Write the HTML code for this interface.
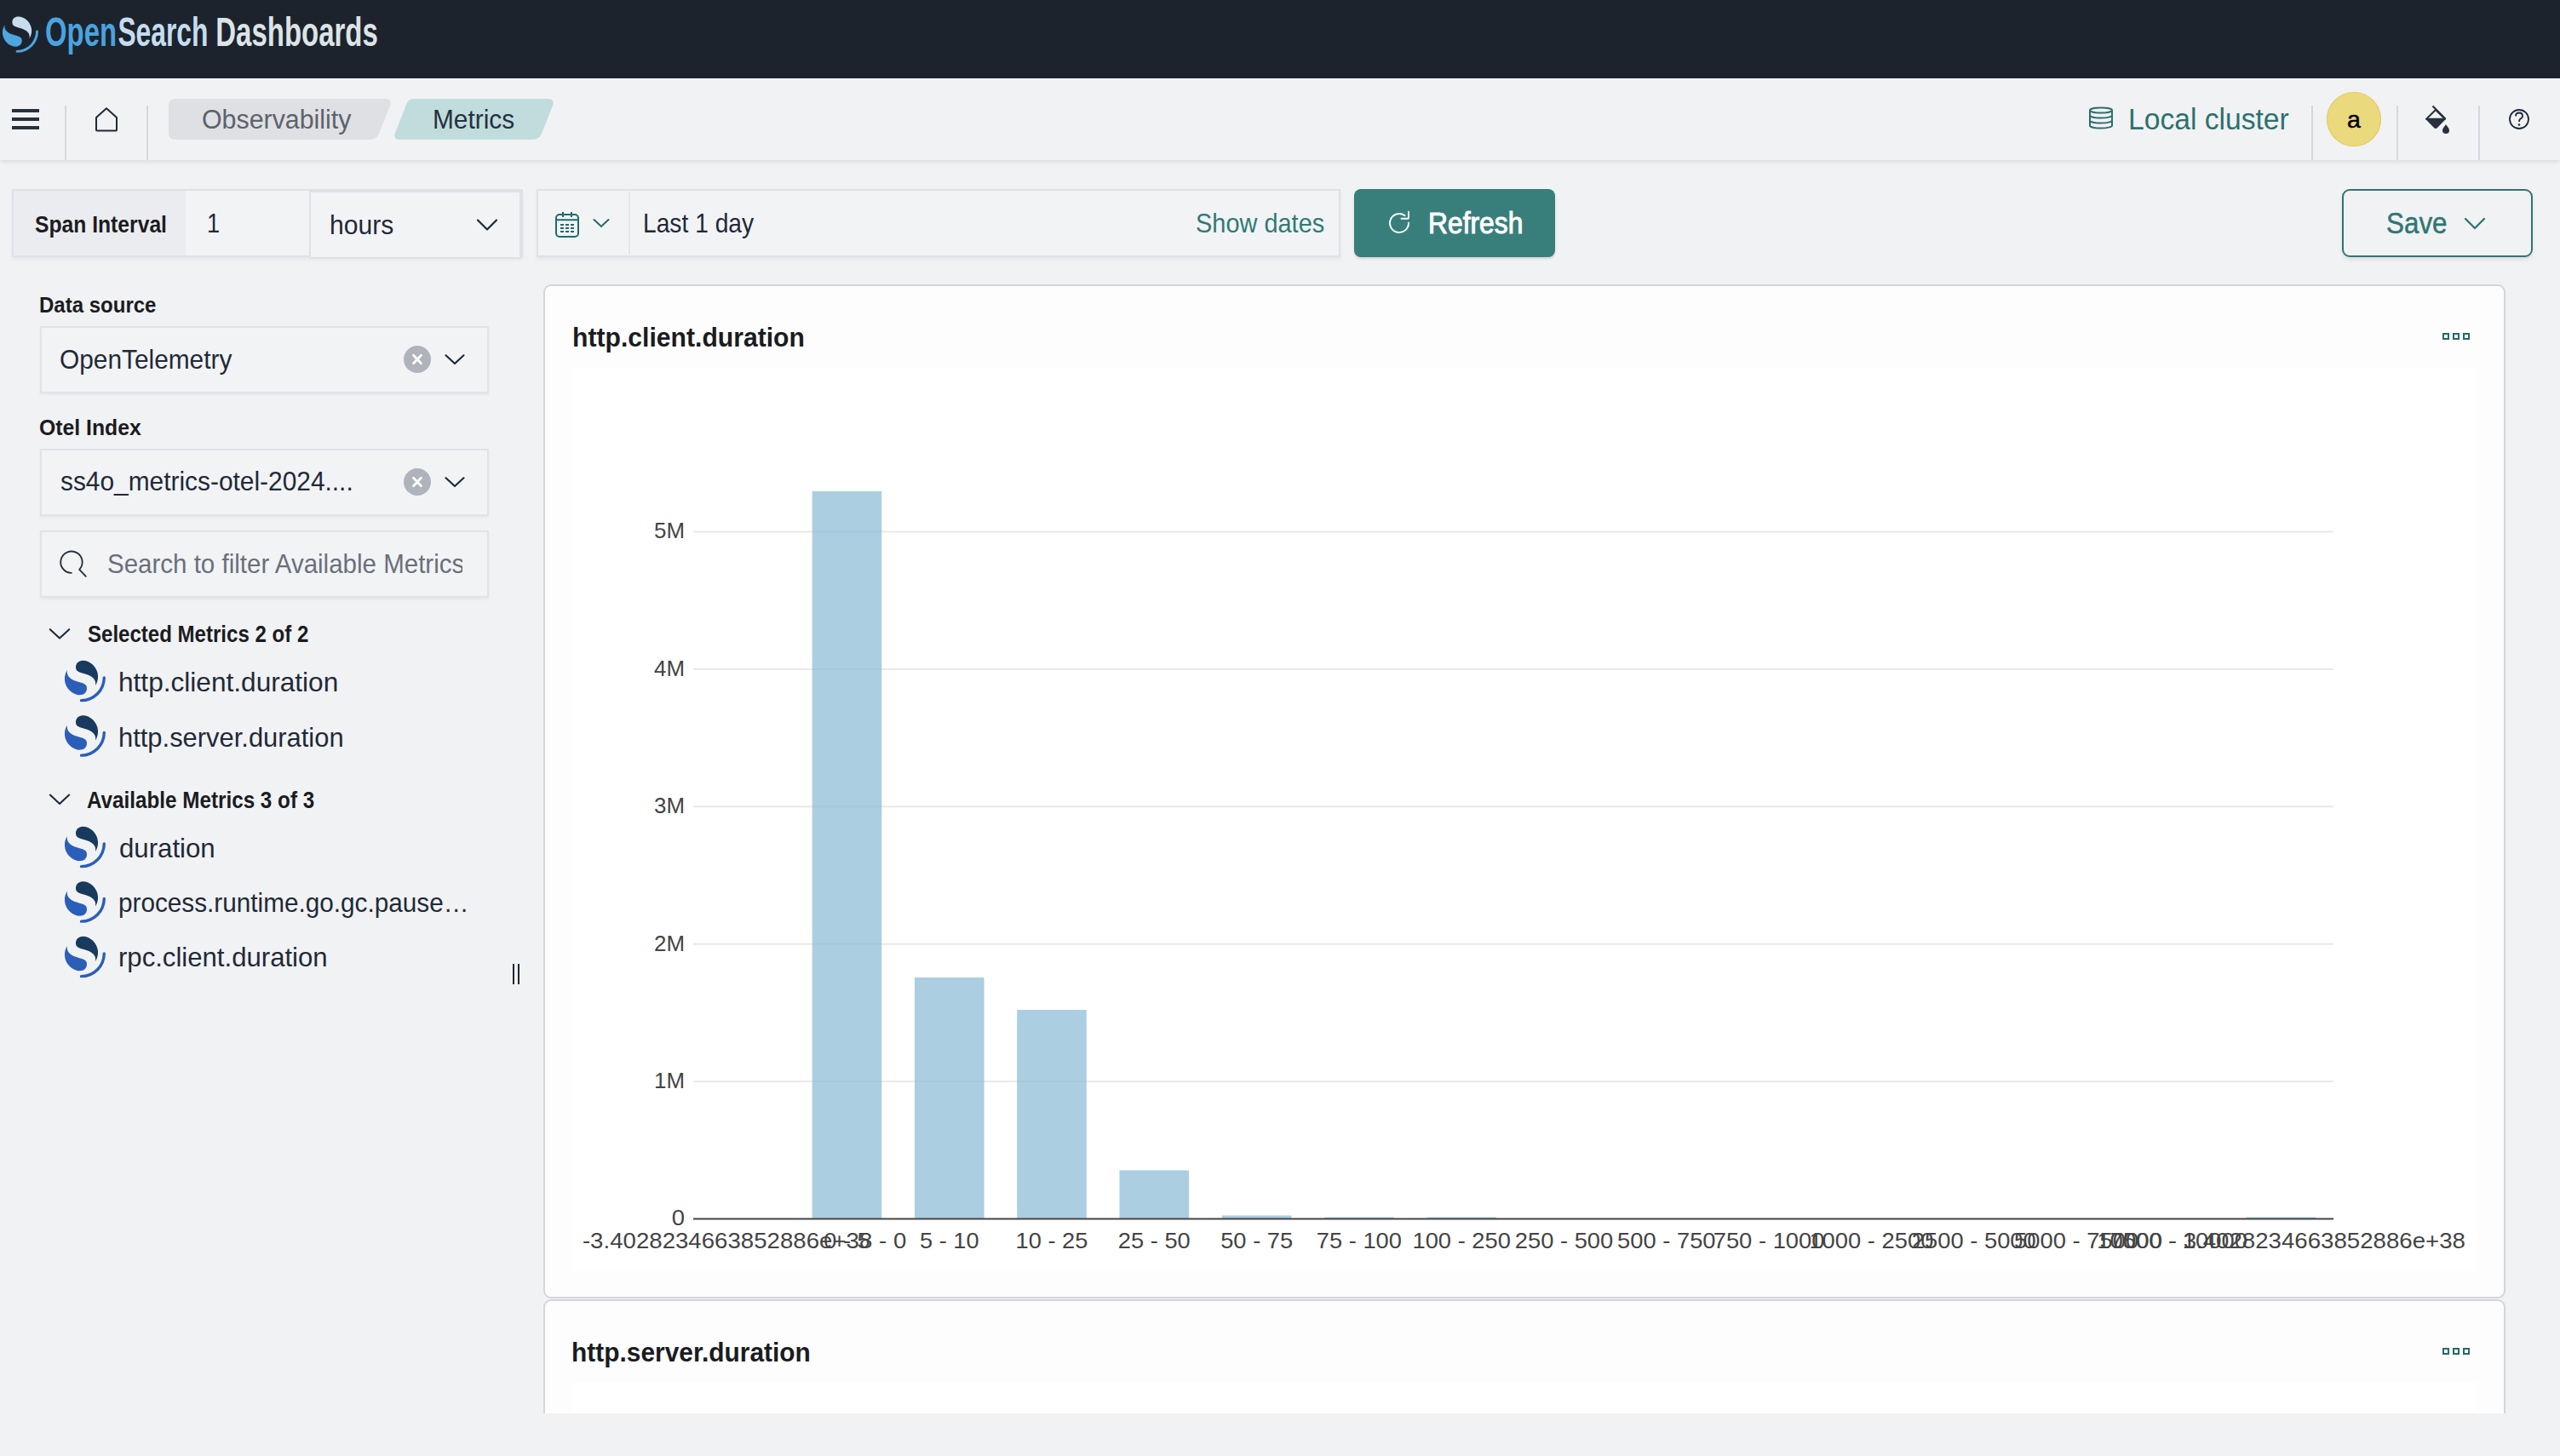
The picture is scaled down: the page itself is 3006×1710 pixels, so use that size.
<!DOCTYPE html>
<html><head><meta charset="utf-8"><title>Metrics</title>
<style>
html,body{margin:0;padding:0;width:3006px;height:1710px;overflow:hidden;background:#f1f2f4;font-family:"Liberation Sans",sans-serif;}
.a{position:absolute;box-sizing:border-box;}
.t{position:absolute;white-space:nowrap;transform-origin:0 0;}
svg{position:absolute;left:0;top:0;overflow:visible;}
</style></head><body>

<div class="a" style="left:0;top:0;width:3006px;height:92px;background:#1c232d"></div>
<svg width="3006" height="92" style="position:absolute;left:0;top:0">
<g transform="translate(3,20) scale(0.65625)"><path fill="#4ea5e0" d="M61.74 23.5a2.26 2.26 0 0 0-2.26 2.26 33.5 33.5 0 0 1-33.5 33.5 2.26 2.26 0 1 0 0 4.52A38.02 38.02 0 0 0 64 25.76a2.26 2.26 0 0 0-2.26-2.26Z"/><path fill="#c7dced" d="M48.08 38c2.23-3.63 4.38-8.48 3.96-15.26C51.16 8.7 38.44-1.97 26.43-.82 21.73-.37 16.91 3.46 17.34 10.32c.18 2.98 1.64 4.74 4.01 6.09 2.26 1.29 5.16 2.1 8.46 3.02 3.98 1.12 8.6 2.37 12.15 4.99 4.26 3.14 7.17 6.77 6.12 13.58Z"/><path fill="#4ea5e0" d="M3.92 14C1.69 17.63-.46 22.48-.04 29.26.84 43.3 13.56 53.97 25.57 52.82c4.7-.45 9.52-4.28 9.09-11.14-.18-2.98-1.64-4.74-4.01-6.09-2.26-1.29-5.16-2.1-8.46-3.02-3.98-1.12-8.6-2.37-12.15-4.99C5.78 24.44 2.87 20.81 3.92 14Z"/></g>
<g font-family="Liberation Sans" font-weight="700" font-size="48"><text x="53" y="53.5" fill="#4aa3df" textLength="84" lengthAdjust="spacingAndGlyphs">Open</text><text x="138.4" y="53.5" fill="#c5dcee" textLength="106" lengthAdjust="spacingAndGlyphs">Search</text><text x="253.3" y="53.5" fill="#dde3e6" textLength="190.5" lengthAdjust="spacingAndGlyphs">Dashboards</text></g>
</svg>
<div class="a" style="left:0;top:92px;width:3006px;height:96px;background:#f1f2f4;box-shadow:0 2px 6px rgba(0,0,0,0.10)"></div>
<svg width="3006" height="200">
<rect x="14" y="128" width="32" height="4" fill="#27313d"/>
<rect x="14" y="138" width="32" height="4" fill="#27313d"/>
<rect x="14" y="148" width="32" height="4" fill="#27313d"/>
<rect x="76" y="124" width="2" height="64" fill="#d5d8dd"/>
<rect x="172" y="124" width="2" height="64" fill="#d5d8dd"/>
<rect x="2714" y="124" width="2" height="64" fill="#d5d8dd"/>
<rect x="2814" y="124" width="2" height="64" fill="#d5d8dd"/>
<rect x="2910" y="124" width="2" height="64" fill="#d5d8dd"/>
<path d="M113 138 L125 127.2 L137 138 L137 152.5 Q137 153.5 136 153.5 L114 153.5 Q113 153.5 113 152.5 Z" fill="none" stroke="#1d2a3a" stroke-width="2" stroke-linejoin="round"/>
<path d="M206 116 L452 116 Q461 116 458 124 L445 157 Q442 164 434 164 L206 164 Q198 164 198 156 L198 124 Q198 116 206 116 Z" fill="#dfe0e4"/>
<path d="M486 116 L643 116 Q652 116 649 124 L636 157 Q633 164 625 164 L470 164 Q461 164 464 156 L477 123 Q480 116 486 116 Z" fill="#c1dcdd"/>
<g fill="none" stroke="#2d706c" stroke-width="2"><ellipse cx="2467" cy="129.5" rx="13" ry="3"/><path d="M2454 129.5 V147.5 A13 3 0 0 0 2480 147.5 V129.5"/><path d="M2454 135.5 A13 3 0 0 0 2480 135.5"/><path d="M2454 141.5 A13 3 0 0 0 2480 141.5"/></g>
<circle cx="2764" cy="140" r="31.5" fill="#ebd97d" stroke="#e3cd6b" stroke-width="1.2"/>
<text x="2764" y="150.2" text-anchor="middle" font-family="Liberation Sans" font-size="28.5" fill="#000" stroke="#000" stroke-width="0.5">a</text>
<path d="M2856.5 124.5 L2871.5 139.7" stroke="#27313d" stroke-width="2.2" fill="none"/><path d="M2860 129 L2849 139.7 L2871 139.7 Z" fill="none" stroke="#27313d" stroke-width="2" stroke-linejoin="round"/><path d="M2848 139.7 L2872 139.7 L2862 150 Q2860 152 2858 150 Z" fill="#27313d"/><path d="M2872 146.3 Q2876 151 2876 153 A4 4 0 0 1 2868 153 Q2868 151 2872 146.3 Z" fill="#27313d"/>
<circle cx="2958" cy="140" r="11" fill="none" stroke="#1d2a3a" stroke-width="1.8"/><path d="M2954 136.5 Q2954 132.5 2958 132.5 Q2962 132.5 2962 136 Q2962 138.5 2959 140 Q2958 141 2958 143" fill="none" stroke="#1d2a3a" stroke-width="1.8"/><circle cx="2958" cy="146.5" r="1.3" fill="#1d2a3a"/>
</svg>
<div class="a" style="left:14px;top:222px;width:600px;height:80px;border:2px solid #dde2e8;background:#f2f3f5;box-shadow:0 3px 4px rgba(0,0,0,0.05)"></div>
<div class="a" style="left:16px;top:224px;width:202px;height:76px;background:#ebecef"></div>
<div class="a" style="left:363px;top:224px;width:249px;height:80px;border:2px solid #dde2e8;background:#f2f3f5"></div>
<div class="a" style="left:630px;top:222px;width:944px;height:80px;border:2px solid #dde2e8;background:#f2f3f5;box-shadow:0 3px 4px rgba(0,0,0,0.05)"></div>
<div class="a" style="left:738px;top:225px;width:2px;height:74px;background:#e3e6ea"></div>
<div class="a" style="left:1590px;top:222px;width:236px;height:80px;border-radius:8px;background:#387f7c;box-shadow:0 2px 3px rgba(0,0,0,0.12)"></div>
<div class="a" style="left:2750px;top:222px;width:224px;height:80px;border-radius:9px;border:2.5px solid #2f7572;box-shadow:0 3px 4px rgba(0,0,0,0.08)"></div>
<div class="a" style="left:46.5px;top:382.5px;width:527px;height:79px;border:2px solid #dfe4ea;background:#f2f3f5;box-shadow:0 2px 3px rgba(0,0,0,0.05)"></div>
<div class="a" style="left:46.5px;top:526.5px;width:527px;height:79px;border:2px solid #dfe4ea;background:#f2f3f5;box-shadow:0 2px 3px rgba(0,0,0,0.05)"></div>
<div class="a" style="left:46.5px;top:622.5px;width:527px;height:79px;border:2px solid #dfe4ea;background:#f2f3f5;box-shadow:0 2px 3px rgba(0,0,0,0.05)"></div>
<div class="a" style="left:638px;top:334px;width:2304px;height:1190.5px;border:2px solid #d4d6db;border-radius:9px;background:#fdfdfe"></div>
<div class="a" style="left:672px;top:432px;width:2236px;height:1060px;background:#ffffff"></div>
<div class="a" style="left:638px;top:1526px;width:2304px;height:300px;border:2px solid #d4d6db;border-radius:9px;background:#fdfdfe"></div>
<div class="a" style="left:672px;top:1623px;width:2236px;height:100px;background:#ffffff"></div>
<div class="a" style="left:600px;top:1660px;width:2406px;height:50px;background:#f1f2f4"></div>
<svg width="3006" height="1710">
<path d="M561 258.5 L572 269.5 L583 258.5" fill="none" stroke="#1d2a3a" stroke-width="2.2" stroke-linejoin="round" stroke-linecap="round"/>
<path d="M697.5 258 L706 266 L714.5 258" fill="none" stroke="#216b68" stroke-width="2" stroke-linecap="round"/>
<path d="M2895 257 L2906 268 L2917 257" fill="none" stroke="#2f7572" stroke-width="2.4" stroke-linejoin="round" stroke-linecap="round"/>
<g fill="none" stroke="#216b68" stroke-width="2"><rect x="653" y="252" width="26" height="26" rx="4"/><path d="M653 258.2 H679 M661 249 V255 M671 249 V255"/></g>
<g fill="#216b68"><rect x="658" y="263" width="4" height="2"/><rect x="658" y="267" width="4" height="2"/><rect x="658" y="271" width="4" height="2"/><rect x="664" y="263" width="4" height="2"/><rect x="664" y="267" width="4" height="2"/><rect x="664" y="271" width="4" height="2"/><rect x="670" y="263" width="4" height="2"/><rect x="670" y="267" width="4" height="2"/><rect x="670" y="271" width="4" height="2"/></g>
<path d="M1649.6 253.2 A11 11 0 1 0 1654 261.6" fill="none" stroke="#fff" stroke-width="1.9" stroke-linecap="round"/><path d="M1654 248.6 V255.2 Q1654 256.8 1652.4 256.8 H1645.5" fill="none" stroke="#fff" stroke-width="1.9" stroke-linecap="round"/>
<circle cx="490" cy="422" r="16" fill="#afb3bb"/><path d="M485.5 417.3 L494.5 426.7 M494.5 417.3 L485.5 426.7" stroke="#fff" stroke-width="2.8" stroke-linecap="round"/><path d="M523.5 417.3 L534 427 L544.5 417.3" fill="none" stroke="#1d2a3a" stroke-width="2.2" stroke-linecap="round" stroke-linejoin="round"/>
<circle cx="490" cy="566" r="16" fill="#afb3bb"/><path d="M485.5 561.3 L494.5 570.7 M494.5 561.3 L485.5 570.7" stroke="#fff" stroke-width="2.8" stroke-linecap="round"/><path d="M523.5 561.3 L534 571 L544.5 561.3" fill="none" stroke="#1d2a3a" stroke-width="2.2" stroke-linecap="round" stroke-linejoin="round"/>
<path d="M83.8 672.9 A12.7 12.7 0 1 1 93.2 668.9 L100.8 676.9" fill="none" stroke="#27313d" stroke-width="1.9" stroke-linecap="round" stroke-linejoin="round"/>
<path d="M58.8 739.2 L70 749.6 L81.2 739.2" fill="none" stroke="#1d2a3a" stroke-width="2.1" stroke-linecap="round" stroke-linejoin="round"/>
<path d="M58.8 933.6 L70 944.0 L81.2 933.6" fill="none" stroke="#1d2a3a" stroke-width="2.1" stroke-linecap="round" stroke-linejoin="round"/>
<g transform="translate(76,776.5) scale(0.75)"><path fill="#2b5eb8" d="M61.74 23.5a2.26 2.26 0 0 0-2.26 2.26 33.5 33.5 0 0 1-33.5 33.5 2.26 2.26 0 1 0 0 4.52A38.02 38.02 0 0 0 64 25.76a2.26 2.26 0 0 0-2.26-2.26Z"/><path fill="#173a5e" d="M48.08 38c2.23-3.63 4.38-8.48 3.96-15.26C51.16 8.7 38.44-1.97 26.43-.82 21.73-.37 16.91 3.46 17.34 10.32c.18 2.98 1.64 4.74 4.01 6.09 2.26 1.29 5.16 2.1 8.46 3.02 3.98 1.12 8.6 2.37 12.15 4.99 4.26 3.14 7.17 6.77 6.12 13.58Z"/><path fill="#2b5eb8" d="M3.92 14C1.69 17.63-.46 22.48-.04 29.26.84 43.3 13.56 53.97 25.57 52.82c4.7-.45 9.52-4.28 9.09-11.14-.18-2.98-1.64-4.74-4.01-6.09-2.26-1.29-5.16-2.1-8.46-3.02-3.98-1.12-8.6-2.37-12.15-4.99C5.78 24.44 2.87 20.81 3.92 14Z"/></g>
<g transform="translate(76,841) scale(0.75)"><path fill="#2b5eb8" d="M61.74 23.5a2.26 2.26 0 0 0-2.26 2.26 33.5 33.5 0 0 1-33.5 33.5 2.26 2.26 0 1 0 0 4.52A38.02 38.02 0 0 0 64 25.76a2.26 2.26 0 0 0-2.26-2.26Z"/><path fill="#173a5e" d="M48.08 38c2.23-3.63 4.38-8.48 3.96-15.26C51.16 8.7 38.44-1.97 26.43-.82 21.73-.37 16.91 3.46 17.34 10.32c.18 2.98 1.64 4.74 4.01 6.09 2.26 1.29 5.16 2.1 8.46 3.02 3.98 1.12 8.6 2.37 12.15 4.99 4.26 3.14 7.17 6.77 6.12 13.58Z"/><path fill="#2b5eb8" d="M3.92 14C1.69 17.63-.46 22.48-.04 29.26.84 43.3 13.56 53.97 25.57 52.82c4.7-.45 9.52-4.28 9.09-11.14-.18-2.98-1.64-4.74-4.01-6.09-2.26-1.29-5.16-2.1-8.46-3.02-3.98-1.12-8.6-2.37-12.15-4.99C5.78 24.44 2.87 20.81 3.92 14Z"/></g>
<g transform="translate(76,971.5) scale(0.75)"><path fill="#2b5eb8" d="M61.74 23.5a2.26 2.26 0 0 0-2.26 2.26 33.5 33.5 0 0 1-33.5 33.5 2.26 2.26 0 1 0 0 4.52A38.02 38.02 0 0 0 64 25.76a2.26 2.26 0 0 0-2.26-2.26Z"/><path fill="#173a5e" d="M48.08 38c2.23-3.63 4.38-8.48 3.96-15.26C51.16 8.7 38.44-1.97 26.43-.82 21.73-.37 16.91 3.46 17.34 10.32c.18 2.98 1.64 4.74 4.01 6.09 2.26 1.29 5.16 2.1 8.46 3.02 3.98 1.12 8.6 2.37 12.15 4.99 4.26 3.14 7.17 6.77 6.12 13.58Z"/><path fill="#2b5eb8" d="M3.92 14C1.69 17.63-.46 22.48-.04 29.26.84 43.3 13.56 53.97 25.57 52.82c4.7-.45 9.52-4.28 9.09-11.14-.18-2.98-1.64-4.74-4.01-6.09-2.26-1.29-5.16-2.1-8.46-3.02-3.98-1.12-8.6-2.37-12.15-4.99C5.78 24.44 2.87 20.81 3.92 14Z"/></g>
<g transform="translate(76,1036) scale(0.75)"><path fill="#2b5eb8" d="M61.74 23.5a2.26 2.26 0 0 0-2.26 2.26 33.5 33.5 0 0 1-33.5 33.5 2.26 2.26 0 1 0 0 4.52A38.02 38.02 0 0 0 64 25.76a2.26 2.26 0 0 0-2.26-2.26Z"/><path fill="#173a5e" d="M48.08 38c2.23-3.63 4.38-8.48 3.96-15.26C51.16 8.7 38.44-1.97 26.43-.82 21.73-.37 16.91 3.46 17.34 10.32c.18 2.98 1.64 4.74 4.01 6.09 2.26 1.29 5.16 2.1 8.46 3.02 3.98 1.12 8.6 2.37 12.15 4.99 4.26 3.14 7.17 6.77 6.12 13.58Z"/><path fill="#2b5eb8" d="M3.92 14C1.69 17.63-.46 22.48-.04 29.26.84 43.3 13.56 53.97 25.57 52.82c4.7-.45 9.52-4.28 9.09-11.14-.18-2.98-1.64-4.74-4.01-6.09-2.26-1.29-5.16-2.1-8.46-3.02-3.98-1.12-8.6-2.37-12.15-4.99C5.78 24.44 2.87 20.81 3.92 14Z"/></g>
<g transform="translate(76,1100.5) scale(0.75)"><path fill="#2b5eb8" d="M61.74 23.5a2.26 2.26 0 0 0-2.26 2.26 33.5 33.5 0 0 1-33.5 33.5 2.26 2.26 0 1 0 0 4.52A38.02 38.02 0 0 0 64 25.76a2.26 2.26 0 0 0-2.26-2.26Z"/><path fill="#173a5e" d="M48.08 38c2.23-3.63 4.38-8.48 3.96-15.26C51.16 8.7 38.44-1.97 26.43-.82 21.73-.37 16.91 3.46 17.34 10.32c.18 2.98 1.64 4.74 4.01 6.09 2.26 1.29 5.16 2.1 8.46 3.02 3.98 1.12 8.6 2.37 12.15 4.99 4.26 3.14 7.17 6.77 6.12 13.58Z"/><path fill="#2b5eb8" d="M3.92 14C1.69 17.63-.46 22.48-.04 29.26.84 43.3 13.56 53.97 25.57 52.82c4.7-.45 9.52-4.28 9.09-11.14-.18-2.98-1.64-4.74-4.01-6.09-2.26-1.29-5.16-2.1-8.46-3.02-3.98-1.12-8.6-2.37-12.15-4.99C5.78 24.44 2.87 20.81 3.92 14Z"/></g>
<rect x="602" y="1132" width="2" height="24" fill="#1d2a3a"/><rect x="608" y="1132" width="2" height="24" fill="#1d2a3a"/>
<rect x="2869" y="392" width="6" height="6" fill="none" stroke="#256b67" stroke-width="2"/>
<rect x="2881" y="392" width="6" height="6" fill="none" stroke="#256b67" stroke-width="2"/>
<rect x="2893" y="392" width="6" height="6" fill="none" stroke="#256b67" stroke-width="2"/>
<rect x="2869" y="1584" width="6" height="6" fill="none" stroke="#256b67" stroke-width="2"/>
<rect x="2881" y="1584" width="6" height="6" fill="none" stroke="#256b67" stroke-width="2"/>
<rect x="2893" y="1584" width="6" height="6" fill="none" stroke="#256b67" stroke-width="2"/>
<g font-family="Liberation Sans" font-size="25" fill="#444">
<rect x="814.0" y="1269.1" width="1926.0" height="2" fill="#e8e9eb"/>
<rect x="814.0" y="1107.7" width="1926.0" height="2" fill="#e8e9eb"/>
<rect x="814.0" y="946.3" width="1926.0" height="2" fill="#e8e9eb"/>
<rect x="814.0" y="784.9" width="1926.0" height="2" fill="#e8e9eb"/>
<rect x="814.0" y="623.5" width="1926.0" height="2" fill="#e8e9eb"/>
<rect x="953.7" y="577.0" width="81.6" height="854.5" fill="#8fbdd7" fill-opacity="0.75"/>
<rect x="1074.0" y="1148.0" width="81.6" height="283.5" fill="#8fbdd7" fill-opacity="0.75"/>
<rect x="1194.2" y="1186.0" width="81.6" height="245.5" fill="#8fbdd7" fill-opacity="0.75"/>
<rect x="1314.5" y="1374.5" width="81.6" height="57" fill="#8fbdd7" fill-opacity="0.75"/>
<rect x="1434.9" y="1427.5" width="81.6" height="4" fill="#8fbdd7" fill-opacity="0.75"/>
<rect x="1555.1" y="1429.5" width="81.6" height="2" fill="#8fbdd7" fill-opacity="0.75"/>
<rect x="1675.5" y="1429.5" width="81.6" height="2" fill="#8fbdd7" fill-opacity="0.75"/>
<rect x="2637.8" y="1429.5" width="81.6" height="2" fill="#8fbdd7" fill-opacity="0.75"/>
<rect x="814.0" y="1430.5" width="1926.0" height="2" fill="#444"/>
<text x="804.0" y="1439.4" text-anchor="end" textLength="15.3" lengthAdjust="spacingAndGlyphs">0</text>
<text x="804.0" y="1278.0" text-anchor="end" textLength="36.0" lengthAdjust="spacingAndGlyphs">1M</text>
<text x="804.0" y="1116.6" text-anchor="end" textLength="36.0" lengthAdjust="spacingAndGlyphs">2M</text>
<text x="804.0" y="955.2" text-anchor="end" textLength="36.0" lengthAdjust="spacingAndGlyphs">3M</text>
<text x="804.0" y="793.8" text-anchor="end" textLength="36.0" lengthAdjust="spacingAndGlyphs">4M</text>
<text x="804.0" y="632.4" text-anchor="end" textLength="36.0" lengthAdjust="spacingAndGlyphs">5M</text>
<text x="874.1" y="1465.6" text-anchor="middle" textLength="380.4" lengthAdjust="spacingAndGlyphs">-3.4028234663852886e+38 - 0</text>
<text x="994.5" y="1465.6" text-anchor="middle" textLength="54.4" lengthAdjust="spacingAndGlyphs">0 - 5</text>
<text x="1114.8" y="1465.6" text-anchor="middle" textLength="69.7" lengthAdjust="spacingAndGlyphs">5 - 10</text>
<text x="1235.0" y="1465.6" text-anchor="middle" textLength="85.0" lengthAdjust="spacingAndGlyphs">10 - 25</text>
<text x="1355.3" y="1465.6" text-anchor="middle" textLength="85.0" lengthAdjust="spacingAndGlyphs">25 - 50</text>
<text x="1475.7" y="1465.6" text-anchor="middle" textLength="85.0" lengthAdjust="spacingAndGlyphs">50 - 75</text>
<text x="1595.9" y="1465.6" text-anchor="middle" textLength="100.2" lengthAdjust="spacingAndGlyphs">75 - 100</text>
<text x="1716.2" y="1465.6" text-anchor="middle" textLength="115.5" lengthAdjust="spacingAndGlyphs">100 - 250</text>
<text x="1836.5" y="1465.6" text-anchor="middle" textLength="115.5" lengthAdjust="spacingAndGlyphs">250 - 500</text>
<text x="1956.8" y="1465.6" text-anchor="middle" textLength="115.5" lengthAdjust="spacingAndGlyphs">500 - 750</text>
<text x="2077.1" y="1465.6" text-anchor="middle" textLength="130.8" lengthAdjust="spacingAndGlyphs">750 - 1000</text>
<text x="2197.4" y="1465.6" text-anchor="middle" textLength="146.0" lengthAdjust="spacingAndGlyphs">1000 - 2500</text>
<text x="2317.8" y="1465.6" text-anchor="middle" textLength="146.0" lengthAdjust="spacingAndGlyphs">2500 - 5000</text>
<text x="2438.1" y="1465.6" text-anchor="middle" textLength="146.0" lengthAdjust="spacingAndGlyphs">5000 - 7500</text>
<text x="2558.3" y="1465.6" text-anchor="middle" textLength="161.3" lengthAdjust="spacingAndGlyphs">7500 - 10000</text>
<text x="2678.6" y="1465.6" text-anchor="middle" textLength="432.8" lengthAdjust="spacingAndGlyphs">10000 - 3.4028234663852886e+38</text>
</g>
</svg>
<div id="obs" class="t" style="left:237.0px;top:126.4px;font-size:30.8px;line-height:30.8px;font-weight:400;color:#5c636c;transform:scaleX(0.9854);">Observability</div>
<div id="met" class="t" style="left:508.0px;top:125.2px;font-size:30.5px;line-height:30.5px;font-weight:400;color:#243140;transform:scaleX(0.9789);">Metrics</div>
<div id="lc" class="t" style="left:2499.1px;top:123.2px;font-size:35.5px;line-height:35.5px;font-weight:400;color:#2d716d;transform:scaleX(0.9470);">Local cluster</div>
<div id="span" class="t" style="left:40.5px;top:249.9px;font-size:27.5px;line-height:27.5px;font-weight:700;color:#1a1c21;transform:scaleX(0.8974);">Span Interval</div>
<div id="one" class="t" style="left:242.7px;top:247.2px;font-size:30.5px;line-height:30.5px;font-weight:400;color:#1f2a37;transform:scaleX(0.8929);">1</div>
<div id="hours" class="t" style="left:387.0px;top:249.2px;font-size:30.5px;line-height:30.5px;font-weight:400;color:#1f2a37;transform:scaleX(0.9859);">hours</div>
<div id="last" class="t" style="left:755.2px;top:247.4px;font-size:30.5px;line-height:30.5px;font-weight:400;color:#1f2a37;transform:scaleX(0.9248);">Last 1 day</div>
<div id="show" class="t" style="left:1404.1px;top:247.4px;font-size:30.5px;line-height:30.5px;font-weight:400;color:#307a75;transform:scaleX(0.9486);">Show dates</div>
<div id="refresh" class="t" style="left:1676.7px;top:245.1px;font-size:34.5px;line-height:34.5px;font-weight:400;color:#ffffff;transform:scaleX(0.9219);-webkit-text-stroke:1px #fff;">Refresh</div>
<div id="save" class="t" style="left:2802.1px;top:245.2px;font-size:35.5px;line-height:35.5px;font-weight:400;color:#2f7672;transform:scaleX(0.8842);-webkit-text-stroke:0.5px #2f7672;">Save</div>
<div id="ds" class="t" style="left:45.8px;top:345.0px;font-size:26.2px;line-height:26.2px;font-weight:700;color:#1a1c21;transform:scaleX(0.9168);">Data source</div>
<div id="otel" class="t" style="left:70.0px;top:406.5px;font-size:31.5px;line-height:31.5px;font-weight:400;color:#1f2a37;transform:scaleX(0.9472);">OpenTelemetry</div>
<div id="oi" class="t" style="left:45.8px;top:489.0px;font-size:26.2px;line-height:26.2px;font-weight:700;color:#1a1c21;transform:scaleX(0.9465);">Otel Index</div>
<div id="idx" class="t" style="left:70.9px;top:550.3px;font-size:31.5px;line-height:31.5px;font-weight:400;color:#1f2a37;transform:scaleX(0.9484);">ss4o_metrics-otel-2024....</div>
<div class="a" style="left:0;top:0;width:542.6px;height:1710px;overflow:hidden"><div id="ph" class="t" style="left:126.1px;top:645.9px;font-size:32px;line-height:32px;font-weight:400;color:#69707b;transform:scaleX(0.9219);">Search to filter Available Metrics</div></div>
<div id="sel" class="t" style="left:102.9px;top:731.3px;font-size:27.3px;line-height:27.3px;font-weight:700;color:#1a1c21;transform:scaleX(0.8809);">Selected Metrics 2 of 2</div>
<div id="m1" class="t" style="left:139.0px;top:786.1px;font-size:31.8px;line-height:31.8px;font-weight:400;color:#1f2a37;transform:scaleX(0.9939);">http.client.duration</div>
<div id="m2" class="t" style="left:139.1px;top:850.5px;font-size:31.8px;line-height:31.8px;font-weight:400;color:#1f2a37;transform:scaleX(0.9720);">http.server.duration</div>
<div id="avail" class="t" style="left:102.0px;top:925.9px;font-size:27.3px;line-height:27.3px;font-weight:700;color:#1a1c21;transform:scaleX(0.8879);">Available Metrics 3 of 3</div>
<div id="m3" class="t" style="left:140.0px;top:980.7px;font-size:31.8px;line-height:31.8px;font-weight:400;color:#1f2a37;transform:scaleX(0.9802);">duration</div>
<div id="m4" class="t" style="left:139.1px;top:1045.1px;font-size:31.8px;line-height:31.8px;font-weight:400;color:#1f2a37;transform:scaleX(0.9349);">process.runtime.go.gc.pause…</div>
<div id="m5" class="t" style="left:139.0px;top:1109.1px;font-size:31.8px;line-height:31.8px;font-weight:400;color:#1f2a37;transform:scaleX(0.9786);">rpc.client.duration</div>
<div id="ct1" class="t" style="left:671.5px;top:381.0px;font-size:31px;line-height:31px;font-weight:700;color:#1a1c21;transform:scaleX(0.9724);">http.client.duration</div>
<div id="ct2" class="t" style="left:671.1px;top:1573.0px;font-size:31px;line-height:31px;font-weight:700;color:#1a1c21;transform:scaleX(0.9647);">http.server.duration</div>
</body></html>
